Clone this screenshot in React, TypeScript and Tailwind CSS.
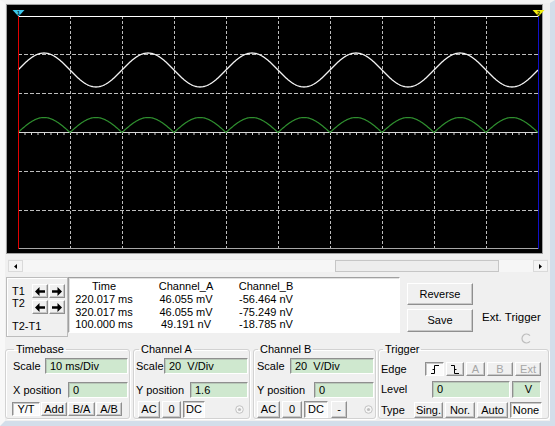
import React from "react";

const GX0 = 11;
const GX1 = 531;
const PERIOD = 104;

function wave(fn: (x: number) => number): string {
  let d = "";
  for (let x = GX0; x <= GX1; x += 1) {
    d += (x === GX0 ? "M" : "L") + x + " " + fn(x).toFixed(2) + " ";
  }
  return d;
}

const whitePath = wave((x) => 65 - 17 * Math.sin((2 * Math.PI * (x - GX0)) / PERIOD));
const greenPath = wave((x) => 127.5 - 15 * Math.abs(Math.sin((2 * Math.PI * (x - GX0)) / PERIOD)));

const vLines = [1, 2, 3, 4, 5, 6, 7, 8, 9].map((k) => GX0 + 52 * k + 0.5);
const hLines = [49.5, 88.5, 166.5, 205.5];
const ticks: number[] = [];
for (let i = 1; i < 80; i++) ticks.push(GX0 + 6.5 * i);

function Scope() {
  return (
    <div className="ml-[1px] mt-[1px] w-[537px] h-[250px] shrink-0 border border-[#a0a0a0] bg-black">
      <svg width="535" height="248" className="block overflow-visible">
        {vLines.map((x) => (
          <line key={x} x1={x} y1={11} x2={x} y2={243} stroke="#bdbdbd" strokeWidth={1} strokeDasharray="3 2" />
        ))}
        {hLines.map((y) => (
          <line key={y} x1={11} y1={y} x2={531} y2={y} stroke="#bdbdbd" strokeWidth={1} strokeDasharray="4 2" />
        ))}
        <line x1={11} y1={127.5} x2={531} y2={127.5} stroke="#d8d8d8" strokeWidth={1} />
        {ticks.map((x) => (
          <line key={x} x1={x + 0.5} y1={127.5} x2={x + 0.5} y2={130} stroke="#d0d0d0" strokeWidth={1} />
        ))}
        <line x1={11} y1={11.5} x2={531} y2={11.5} stroke="#ffffff" strokeWidth={1} />
        <line x1={11} y1={243.5} x2={531} y2={243.5} stroke="#a8a8a8" strokeWidth={1} />
        <path d={greenPath} fill="none" stroke="#2f8f2f" strokeWidth={1.2} />
        <path d={whitePath} fill="none" stroke="#f2f2f2" strokeWidth={1.3} />
        <line x1={11.5} y1={11} x2={11.5} y2={244} stroke="#e00000" strokeWidth={1} />
        <line x1={531.5} y1={11} x2={531.5} y2={244} stroke="#1010c8" strokeWidth={1} />
        <polygon points="5.5,5 17.5,5 11.5,11.5" fill="#3cc8ee" />
        <text x={11.5} y={9.6} fontSize={5.5} fontWeight={700} textAnchor="middle" fill="#003040" fontFamily="Liberation Sans, sans-serif">1</text>
        <polygon points="525.5,5 537.5,5 531.5,11.5" fill="#f2ee10" />
        <text x={531.5} y={9.6} fontSize={5.5} fontWeight={700} textAnchor="middle" fill="#303000" fontFamily="Liberation Sans, sans-serif">2</text>
      </svg>
    </div>
  );
}

function ScrollBar() {
  return (
    <div className="mt-[5px] ml-[3px] w-[540px] h-[13px] shrink-0 flex bg-[#f6f6f6] border-t border-[#ececec]">
      <div className="w-[15px] h-full bg-[#f4f4f4] border border-[#dadada] flex items-center justify-center">
        <svg width="3" height="5" className="block">
          <path d="M3 0 L0 2.5 L3 5 Z" fill="#000" />
        </svg>
      </div>
      <div className="flex-1 flex">
        <div className="ml-[312px] w-[164px] h-full bg-[#ededed] border border-[#c6c6c6]" />
      </div>
      <div className="w-[15px] h-full bg-[#f4f4f4] border border-[#dadada] flex items-center justify-center">
        <svg width="3" height="5" className="block">
          <path d="M0 0 L3 2.5 L0 5 Z" fill="#000" />
        </svg>
      </div>
    </div>
  );
}

const RAISED =
  "bg-[#f0f0f0] border border-t-white border-l-white border-r-[#8f8f8f] border-b-[#8f8f8f] shadow-[inset_-1px_-1px_0_#c8c8c8]";
const PRESSED =
  "bg-[#fbfbfb] border border-t-[#8f8f8f] border-l-[#8f8f8f] border-r-white border-b-white shadow-[inset_1px_1px_0_#c8c8c8]";

function Btn({
  children,
  cls,
  pressed,
  disabled,
}: {
  children?: React.ReactNode;
  cls: string;
  pressed?: boolean;
  disabled?: boolean;
}) {
  return (
    <div
      className={`${pressed ? PRESSED : RAISED} ${disabled ? "text-[#a6a6a6]" : "text-black"} flex items-center justify-center shrink-0 whitespace-nowrap leading-none ${cls}`}
    >
      {children}
    </div>
  );
}

function Field({ children, cls }: { children?: React.ReactNode; cls: string }) {
  return (
    <div
      className={`bg-[#cfe8cf] border border-t-[#8f8f8f] border-l-[#8f8f8f] border-r-white border-b-white shadow-[inset_1px_1px_0_#b8c8b8] flex items-center pl-[4px] whitespace-pre leading-none shrink-0 ${cls}`}
    >
      {children}
    </div>
  );
}

function Arrow({ dir }: { dir: "l" | "r" }) {
  return (
    <svg width="10" height="9" className="block">
      {dir === "l" ? (
        <path d="M0 4.5 L4.5 0 L4.5 3.2 L10 3.2 L10 5.8 L4.5 5.8 L4.5 9 Z" fill="#000" />
      ) : (
        <path d="M10 4.5 L5.5 0 L5.5 3.2 L0 3.2 L0 5.8 L5.5 5.8 L5.5 9 Z" fill="#000" />
      )}
    </svg>
  );
}

function TBox() {
  return (
    <div className="w-[62px] h-[60px] shrink-0 border border-[#bcbcbc] shadow-[inset_1px_1px_0_white] flex flex-col">
      <div className="mt-[6px] h-[14px] flex items-center">
        <span className="ml-[5px] w-[20px]">T1</span>
        <Btn cls="w-[16px] h-[14px]"><Arrow dir="l" /></Btn>
        <Btn cls="ml-[1px] w-[16px] h-[14px]"><Arrow dir="r" /></Btn>
      </div>
      <div className="mt-[2px] h-[14px] flex items-start">
        <span className="ml-[5px] w-[20px] -mt-[3px]">T2</span>
        <Btn cls="w-[16px] h-[14px]"><Arrow dir="l" /></Btn>
        <Btn cls="ml-[1px] w-[16px] h-[14px]"><Arrow dir="r" /></Btn>
      </div>
      <div className="mt-[6px] ml-[5px] leading-[13px]">T2-T1</div>
    </div>
  );
}

function DataBox() {
  const rows = [
    ["220.017 ms", "46.055 mV", "-56.464 nV"],
    ["320.017 ms", "46.055 mV", "-75.249 nV"],
    ["100.000 ms", "49.191 nV", "-18.785 nV"],
  ];
  return (
    <div className="w-[332px] h-[56px] shrink-0 bg-white border border-t-[#a0a0a0] border-l-[#a0a0a0] border-r-white border-b-white shadow-[inset_1px_1px_0_#e0e0e0] pt-[1px]">
      <div className="grid grid-cols-[70px_94px_66px] text-center whitespace-pre">
        <div className="leading-[14px]">Time</div>
        <div className="leading-[14px]">Channel_A</div>
        <div className="leading-[14px]">Channel_B</div>
        {rows.map((r, i) => (
          <React.Fragment key={i}>
            <div className="leading-[12.5px]">{r[0]}</div>
            <div className="leading-[12.5px]">{r[1]}</div>
            <div className="leading-[12.5px]">{r[2]}</div>
          </React.Fragment>
        ))}
      </div>
    </div>
  );
}

function MiddleRow() {
  return (
    <div className="mt-[5px] ml-[1px] h-[60px] shrink-0 flex items-start">
      <TBox />
      <DataBox />
      <div className="ml-[7px] w-[66px] flex flex-col">
        <Btn cls="mt-[6px] h-[22px] w-[66px] text-[11px]">Reverse</Btn>
        <Btn cls="mt-[4px] h-[23px] w-[66px] text-[11px]">Save</Btn>
      </div>
      <div className="ml-[9px] flex flex-col">
        <span className="mt-[34px] leading-[13px] whitespace-nowrap text-[11.5px]">Ext. Trigger</span>
        <svg width="11" height="11" className="block mt-[9px] ml-[39px]">
          <path d="M8.95 2.61 A4.5 4.5 0 1 0 8.95 8.39" fill="none" stroke="#bdbdbd" strokeWidth={1.2} />
        </svg>
      </div>
    </div>
  );
}

function Radio() {
  return (
    <svg width="9" height="9" className="block shrink-0">
      <circle cx={4.5} cy={4.5} r={3.8} fill="#f6f6f6" stroke="#c2c2c2" strokeWidth={1} />
      <circle cx={4.5} cy={4.5} r={1.6} fill="#bfbfbf" />
    </svg>
  );
}

const FS = "border border-[#d2d2d2] rounded-[3px] shadow-[inset_1px_1px_0_white,1px_1px_0_white] min-w-0 h-full shrink-0";

function RisingEdge() {
  return (
    <svg width="10" height="11" className="block">
      <path d="M1 9.5 H4.5 V1.5 H9" fill="none" stroke="#000" strokeWidth={1} />
      <path d="M2.5 5.5 H4.5" fill="none" stroke="#000" strokeWidth={1} />
    </svg>
  );
}

function FallingEdge() {
  return (
    <svg width="10" height="11" className="block">
      <path d="M1 1.5 H4.5 V9.5 H9" fill="none" stroke="#000" strokeWidth={1} />
      <path d="M4.5 5.5 H6.5" fill="none" stroke="#000" strokeWidth={1} />
    </svg>
  );
}

function Groups() {
  return (
    <div className="mt-[6px] h-[76px] shrink-0 flex items-stretch">
      {/* Timebase */}
      <fieldset className={`${FS} w-[125px]`}>
        <legend className="ml-[8px] px-[2px] leading-[13px]">Timebase</legend>
        <div className="mt-[2px] h-[16px] flex items-center">
          <span className="ml-[7px]">Scale</span>
          <Field cls="ml-auto mr-[1px] w-[83px] h-[16px]">10 ms/Div</Field>
        </div>
        <div className="mt-[8px] h-[16px] flex items-center">
          <span className="ml-[7px] whitespace-nowrap">X position</span>
          <Field cls="ml-auto mr-[1px] w-[60px] h-[16px]">0</Field>
        </div>
        <div className="mt-[4px] ml-[6px] h-[14px] flex gap-[1px]">
          <Btn pressed cls="w-[28px] h-[14px]">Y/T</Btn>
          <Btn cls="w-[26px] h-[14px]">Add</Btn>
          <Btn cls="w-[27px] h-[14px]">B/A</Btn>
          <Btn cls="w-[26px] h-[14px]">A/B</Btn>
        </div>
      </fieldset>

      {/* Channel A */}
      <fieldset className={`${FS} ml-[3px] w-[117px]`}>
        <legend className="ml-[5px] px-[2px] leading-[13px]">Channel A</legend>
        <div className="mt-[2px] h-[16px] flex items-center">
          <span className="ml-[2px]">Scale</span>
          <Field cls="ml-auto mr-[1px] w-[84px] h-[16px]">20  V/Div</Field>
        </div>
        <div className="mt-[8px] h-[16px] flex items-center">
          <span className="ml-[2px] whitespace-nowrap">Y position</span>
          <Field cls="ml-auto mr-[1px] w-[58px] h-[16px]">1.6</Field>
        </div>
        <div className="mt-[3px] ml-[4px] h-[17px] flex items-center">
          <Btn cls="w-[22px] h-[17px]">AC</Btn>
          <Btn cls="ml-[2px] w-[19px] h-[17px]">0</Btn>
          <Btn pressed cls="ml-[2px] w-[22px] h-[17px]">DC</Btn>
          <div className="ml-[30px]"><Radio /></div>
        </div>
      </fieldset>

      {/* Channel B */}
      <fieldset className={`${FS} ml-[3px] w-[123px]`}>
        <legend className="ml-[4px] px-[2px] leading-[13px]">Channel B</legend>
        <div className="mt-[2px] h-[16px] flex items-center">
          <span className="ml-[3px]">Scale</span>
          <Field cls="ml-auto mr-[1px] w-[84px] h-[16px]">20  V/Div</Field>
        </div>
        <div className="mt-[8px] h-[16px] flex items-center">
          <span className="ml-[3px] whitespace-nowrap">Y position</span>
          <Field cls="ml-auto mr-[1px] w-[60px] h-[16px]">0</Field>
        </div>
        <div className="mt-[3px] ml-[3px] h-[17px] flex items-center">
          <Btn cls="w-[23px] h-[17px]">AC</Btn>
          <Btn cls="ml-[2px] w-[20px] h-[17px]">0</Btn>
          <Btn pressed cls="ml-[2px] w-[24px] h-[17px]">DC</Btn>
          <Btn cls="ml-[3px] w-[16px] h-[17px]">-</Btn>
          <div className="ml-[17px]"><Radio /></div>
        </div>
      </fieldset>

      {/* Trigger */}
      <fieldset className={`${FS} ml-[2px] w-[171px]`}>
        <legend className="ml-[4px] px-[2px] leading-[13px]">Trigger</legend>
        <div className="mt-[6px] h-[14px] flex items-center">
          <span className="ml-[2px] w-[44px]">Edge</span>
          <Btn pressed cls="w-[19px] h-[14px]"><RisingEdge /></Btn>
          <Btn cls="ml-[2px] w-[18px] h-[14px]"><FallingEdge /></Btn>
          <Btn disabled cls="ml-[2px] w-[19px] h-[14px]">A</Btn>
          <Btn disabled cls="ml-[2px] w-[26px] h-[14px]">B</Btn>
          <Btn disabled cls="ml-[2px] w-[26px] h-[14px]">Ext</Btn>
        </div>
        <div className="mt-[5px] h-[17px] flex items-center">
          <span className="ml-[2px] w-[51px]">Level</span>
          <Field cls="w-[78px] h-[17px]">0</Field>
          <Field cls="ml-[2px] w-[29px] h-[17px] justify-center pl-0">V</Field>
        </div>
        <div className="mt-[4px] h-[16px] flex items-center">
          <span className="ml-[2px] w-[33px]">Type</span>
          <Btn cls="w-[29px] h-[16px]">Sing.</Btn>
          <Btn cls="ml-[2px] w-[30px] h-[16px]">Nor.</Btn>
          <Btn cls="ml-[2px] w-[31px] h-[16px]">Auto</Btn>
          <Btn pressed cls="ml-[2px] w-[32px] h-[16px]">None</Btn>
        </div>
      </fieldset>
    </div>
  );
}

export default function App() {
  return (
    <div className="w-[555px] h-[426px] overflow-hidden bg-[#f0f0f0] border-solid border-l-[5px] border-t-[3px] border-r-[5px] border-b-[5px] border-l-[#f8f8f8] border-t-[#f3f3f3] border-r-[#d3deea] border-b-[#d3deea] flex flex-col text-[11px] text-black leading-[13px] font-['Liberation_Sans',Arial,sans-serif]">
      <Scope />
      <ScrollBar />
      <MiddleRow />
      <Groups />
    </div>
  );
}
